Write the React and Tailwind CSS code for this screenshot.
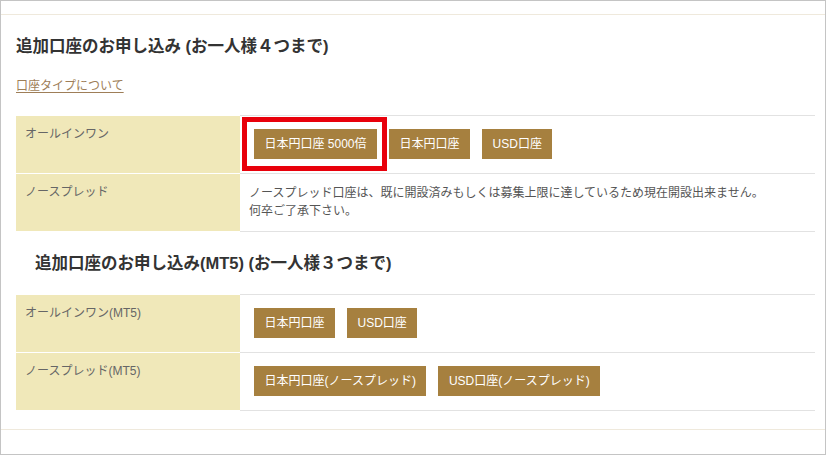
import React from 'react';

const Btn = ({ children }) => (
  <span className="inline-block h-[30px] leading-[30px] px-[10.5px] bg-[#a6803f] text-white text-[12px] whitespace-nowrap">
    {children}
  </span>
);

const Row = ({ label, children, textCell }) => (
  <tr>
    <th className="w-[224px] bg-[#f0e8b9] border-y border-white text-left align-top font-normal text-[12px] leading-[18px] text-[#666] pl-[9px] pt-[9px]">
      {label}
    </th>
    <td
      className={
        textCell
          ? 'border-y border-[#e2e2e2] align-top pl-[9px] pt-[10px] pb-[11px] text-[12px] leading-[18px] text-[#555]'
          : 'border-y border-[#e2e2e2] align-top pl-[14px] pt-[13px] pb-[14px]'
      }
    >
      {children}
    </td>
  </tr>
);

const App = () => {
  return (
    <div className="w-[826px] h-[455px] border border-[#c4c4c4] bg-white font-['Liberation_Sans','Noto_Sans_CJK_JP',sans-serif] overflow-hidden">
      <div className="h-[13px]"></div>
      <div className="border-t border-[#efe9dc] px-[15px]">
        <h2 className="mt-[19px] text-[16.5px] leading-[24px] font-bold text-[#333]">
          追加口座のお申し込み (お一人様４つまで)
        </h2>
        <div className="mt-[19px] text-[12px] leading-[18px]">
          <a href="#" className="text-[#9e7e58] underline underline-offset-2">口座タイプについて</a>
        </div>

        <table className="mt-[20px] w-[799px] border-collapse">
          <tbody>
            <Row label="オールインワン">
              <div className="flex gap-[12px]">
                <span className="relative inline-block">
                  <Btn>日本円口座 5000倍</Btn>
                  <span className="absolute -left-[12px] -top-[12px] -right-[10px] -bottom-[12px] border-[5px] border-[#e8000b] pointer-events-none"></span>
                </span>
                <Btn>日本円口座</Btn>
                <Btn>USD口座</Btn>
              </div>
            </Row>
            <Row label="ノースプレッド" textCell>
              ノースプレッド口座は、既に開設済みもしくは募集上限に達しているため現在開設出来ません。
              <br />
              何卒ご了承下さい。
            </Row>
          </tbody>
        </table>

        <h2 className="mt-[19px] pl-[19px] text-[16.5px] leading-[24px] font-bold text-[#333]">
          追加口座のお申し込み(MT5) (お一人様３つまで)
        </h2>

        <table className="mt-[19px] w-[799px] border-collapse">
          <tbody>
            <Row label="オールインワン(MT5)">
              <div className="flex gap-[12px]">
                <Btn>日本円口座</Btn>
                <Btn>USD口座</Btn>
              </div>
            </Row>
            <Row label="ノースプレッド(MT5)">
              <div className="flex gap-[12px]">
                <Btn>日本円口座(ノースプレッド)</Btn>
                <Btn>USD口座(ノースプレッド)</Btn>
              </div>
            </Row>
          </tbody>
        </table>
      </div>
      <div className="mt-[18px] border-t border-[#efe9dc]"></div>
    </div>
  );
};

export default App;
